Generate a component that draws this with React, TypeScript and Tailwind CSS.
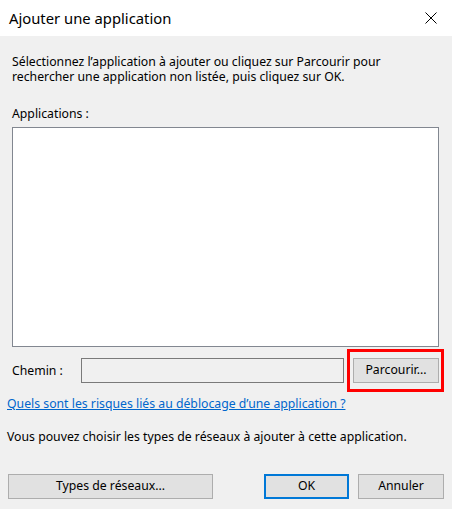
import React from "react";

export default function App() {
  const font = { fontFamily: '"Segoe UI", "Noto Sans", sans-serif' };
  return (
    <div
      className="w-[452px] h-[509px] bg-[#f0f0f0] flex flex-col text-black overflow-hidden"
      style={font}
    >
      {/* Title bar */}
      <div className="h-[36px] bg-white flex items-center justify-between pl-[9px] pr-[15px] shrink-0">
        <span className="text-[14.8px] leading-none">Ajouter une application</span>
        <svg width="12" height="12" viewBox="0 0 12 12" className="block">
          <path d="M0.5 0.5 L11.5 11.5 M11.5 0.5 L0.5 11.5" stroke="#000" strokeWidth="1" fill="none" />
        </svg>
      </div>

      {/* Instruction */}
      <p className="ml-[12px] mt-[18px] text-[12.25px] leading-[15px] whitespace-nowrap">
        Sélectionnez l’application à ajouter ou cliquez sur Parcourir pour
        <br />
        rechercher une application non listée, puis cliquez sur OK.
      </p>

      <div className="ml-[12px] mt-[22px] text-[12.25px] leading-[15px]">Applications :</div>

      {/* List box */}
      <div className="ml-[12px] mt-[6px] w-[427px] h-[220px] bg-white border border-[#828790] shrink-0" />

      {/* Chemin row */}
      <div className="mt-[2px] ml-[12px] flex items-center">
        <span className="w-[69px] text-[12.25px] leading-[15px]">Chemin :</span>
        <div className="w-[263px] h-[25px] border border-[#7a7a7a] bg-[#f0f0f0]" />
        <div className="ml-[3px] w-[97px] h-[43px] border-[3px] border-[#ff0000] pl-[3px] pt-[6px]">
          <button className="w-[86px] h-[25px] bg-[#e1e1e1] border border-[#adadad] text-[12.25px] leading-none flex items-center justify-center">
            Parcourir...
          </button>
        </div>
      </div>

      {/* Link */}
      <a className="ml-[7px] mt-[4px] text-[12.25px] leading-[15px] text-[#0066cc] underline self-start cursor-pointer whitespace-nowrap">
        Quels sont les risques liés au déblocage d’une application ?
      </a>

      <div className="ml-[7px] mt-[18px] text-[12.25px] leading-[15px] whitespace-nowrap">
        Vous pouvez choisir les types de réseaux à ajouter à cette application.
      </div>

      {/* Buttons */}
      <div className="mt-[30px] ml-[8px] flex">
        <button className="w-[205px] h-[25px] bg-[#e1e1e1] border border-[#adadad] text-[12.25px] leading-none flex items-center justify-center">
          Types de réseaux...
        </button>
        <button className="ml-[51px] w-[85px] h-[25px] bg-[#e1e1e1] border-2 border-[#0078d7] text-[12.25px] leading-none flex items-center justify-center">
          OK
        </button>
        <button className="ml-[9px] w-[86px] h-[25px] bg-[#e1e1e1] border border-[#adadad] text-[12.25px] leading-none flex items-center justify-center">
          Annuler
        </button>
      </div>
    </div>
  );
}
